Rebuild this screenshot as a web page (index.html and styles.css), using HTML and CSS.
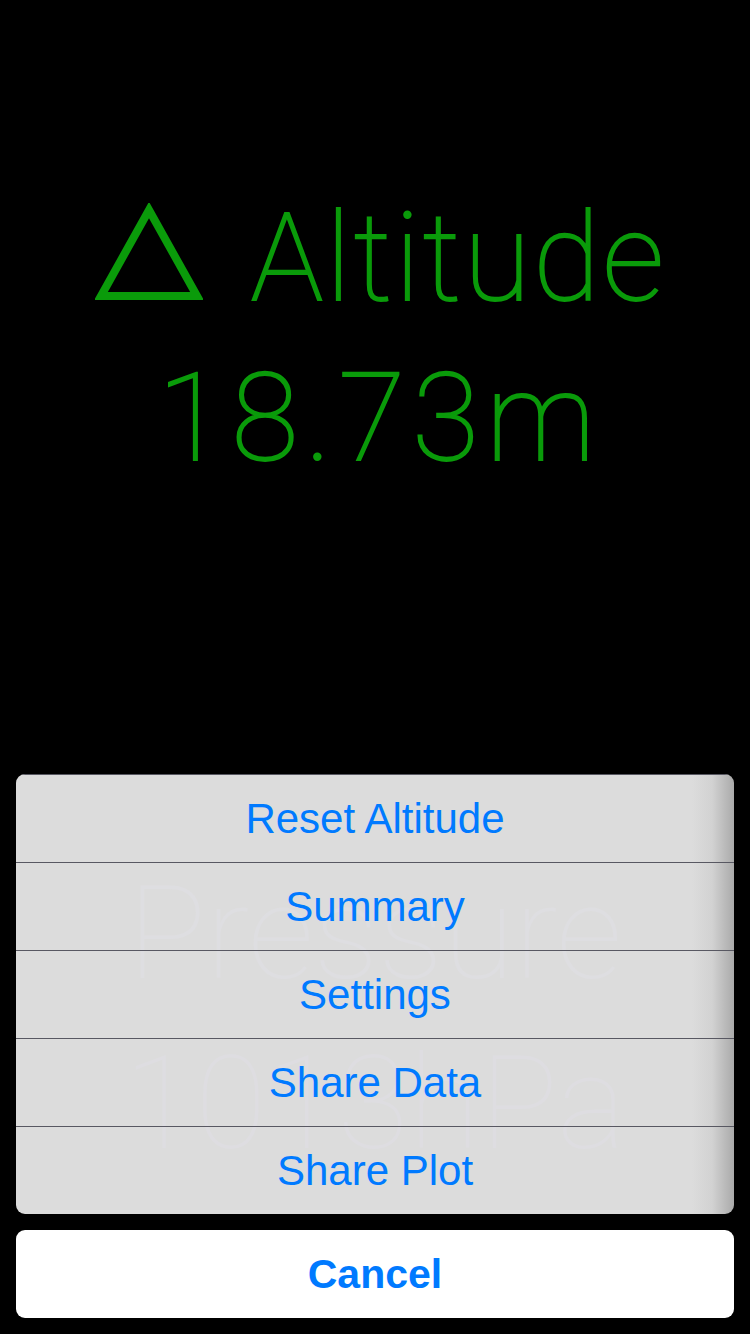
FILE: index.html
```html
<!DOCTYPE html>
<html>
<head>
<meta charset="utf-8">
<link rel="stylesheet" href="styles.css">
</head>
<body>
<div class="screen">
  <div class="readout">
    <div class="line title">
      <svg class="delta" width="108" height="97" viewBox="0 0 108 97"><polygon points="54,7 102,93 6,93" fill="none" stroke="#0a9b0a" stroke-width="8" stroke-linejoin="miter"/></svg><span class="word">Altitude</span>
    </div>
    <div class="line value">18.73m</div>
  </div>
  <div class="sheet">
    <div class="menu">
      <div class="ghost">
        <div class="ghost-line g1">Pressure</div>
        <div class="ghost-line g2">1013hPa</div>
      </div>
      <div class="item">Reset Altitude</div>
      <div class="item">Summary</div>
      <div class="item">Settings</div>
      <div class="item">Share Data</div>
      <div class="item">Share Plot</div>
    </div>
    <div class="cancel">Cancel</div>
  </div>
</div>
</body>
</html>
```
FILE: styles.css
```css
html, body {
  margin: 0;
  padding: 0;
  background: #000;
}
.screen {
  width: 750px;
  height: 1334px;
  display: flex;
  flex-direction: column;
  background: #000;
  overflow: hidden;
}
.readout {
  padding-top: 179px;
  color: #0a9b0a;
  font-family: Roboto, "Liberation Sans", sans-serif;
  font-weight: 100;
  font-size: 122px;
  line-height: 160px;
  text-align: center;
  -webkit-text-stroke: 1.8px #0a9b0a;
}
.line {
  white-space: nowrap;
}
.title {
  display: flex;
  justify-content: center;
  align-items: baseline;
  padding-left: 12px;
}
.word {
  letter-spacing: 2.6px;
}
.delta {
  margin-right: 47px;
  align-self: flex-end;
  margin-bottom: 39px;
}
.value {
  letter-spacing: 7px;
  padding-left: 10px;
}
.sheet {
  margin-top: auto;
  padding: 0 16px 16px;
  display: flex;
  flex-direction: column;
  gap: 16px;
}
.menu {
  position: relative;
  border-radius: 9px;
  overflow: hidden;
  background: linear-gradient(to right, #dcdcdc 0, #dcdcdc calc(100% - 42px), #d2d2d2 calc(100% - 22px), #aaaaaa 100%);
}
.ghost {
  position: absolute;
  left: 0;
  top: 0;
  width: 100%;
  color: #e0dfe6;
  font-family: Roboto, "Liberation Sans", sans-serif;
  font-weight: 100;
  font-size: 130px;
  line-height: 160px;
  text-align: center;
  opacity: 0.5;
}
.g1 {
  margin-top: 80px;
}
.g2 {
  margin-top: 10px;
}
.item {
  position: relative;
  height: 87px;
  display: flex;
  align-items: center;
  justify-content: center;
  font-family: "Liberation Sans", Arial, sans-serif;
  font-size: 42px;
  color: #007aff;
  border-top: 1px solid #585862;
}
.item:first-of-type {
  border-top: none;
  height: 88px;
}
.cancel {
  height: 88px;
  border-radius: 9px;
  background: #fff;
  display: flex;
  align-items: center;
  justify-content: center;
  font-family: "Liberation Sans", Arial, sans-serif;
  font-weight: bold;
  font-size: 41px;
  color: #007aff;
}
```
